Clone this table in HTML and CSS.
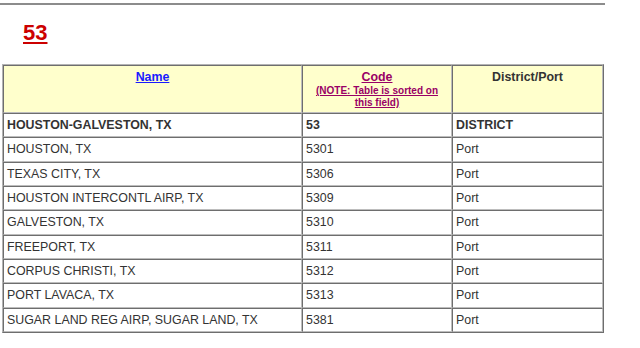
FILE: index.html
```html
<!DOCTYPE html>
<html>
<head>
<meta charset="utf-8">
<link rel="stylesheet" href="styles.css">
</head>
<body>
<div class="rule"></div>
<h2 class="district"><a href="#">53</a></h2>
<table class="ports">
  <thead>
    <tr>
      <th class="c-name"><a class="sort name-link" href="#">Name</a></th>
      <th class="c-code"><a class="sort code-link" href="#">Code</a><br><a class="note" href="#">(NOTE: Table is sorted on this field)</a></th>
      <th class="c-type"><span class="plain">District/Port</span></th>
    </tr>
  </thead>
  <tbody>
    <tr class="lead"><td>HOUSTON-GALVESTON, TX</td><td>53</td><td>DISTRICT</td></tr>
    <tr><td>HOUSTON, TX</td><td>5301</td><td>Port</td></tr>
    <tr><td>TEXAS CITY, TX</td><td>5306</td><td>Port</td></tr>
    <tr><td>HOUSTON INTERCONTL AIRP, TX</td><td>5309</td><td>Port</td></tr>
    <tr><td>GALVESTON, TX</td><td>5310</td><td>Port</td></tr>
    <tr><td>FREEPORT, TX</td><td>5311</td><td>Port</td></tr>
    <tr><td>CORPUS CHRISTI, TX</td><td>5312</td><td>Port</td></tr>
    <tr><td>PORT LAVACA, TX</td><td>5313</td><td>Port</td></tr>
    <tr><td>SUGAR LAND REG AIRP, SUGAR LAND, TX</td><td>5381</td><td>Port</td></tr>
  </tbody>
</table>
</body>
</html>
```
FILE: styles.css
```css
html, body {
  margin: 0;
  padding: 0;
  background: #ffffff;
}
body {
  font-family: "Liberation Sans", Arial, sans-serif;
  color: #333333;
}
.rule {
  width: 605px;
  height: 2px;
  margin-top: 3px;
  background: #8c8c8c;
}
.district {
  margin: 16px 0 19px 23px;
  font-size: 22px;
  line-height: 24px;
  font-weight: bold;
}
.district a {
  color: #cc0000;
}
.ports {
  margin-left: 2px;
  width: 602px;
  table-layout: fixed;
  border-collapse: separate;
  border-spacing: 0;
  border-top: 1px solid #b4b4b4;
  border-left: 1px solid #b4b4b4;
  border-right: 1px solid #6e6e6e;
  border-bottom: 1px solid #6e6e6e;
  font-size: 12.4px;
}
.ports th, .ports td {
  box-sizing: border-box;
  border-top: 1px solid #6e6e6e;
  border-left: 1px solid #6e6e6e;
  border-right: 1px solid #bdbdbd;
  border-bottom: 1px solid #bdbdbd;
}
.ports th {
  background: #ffffcc;
  height: 48px;
  vertical-align: top;
  text-align: center;
  padding: 4px 3px 0;
  line-height: 14px;
  font-weight: bold;
}
.c-name { width: 299px; }
.c-code { width: 150px; }
.c-type { width: 151px; }
.ports td {
  height: 24.33px;
  padding: 0 3px;
  vertical-align: middle;
  line-height: 14px;
}
.lead td {
  font-weight: bold;
}
.name-link {
  color: #1a1aff;
}
.code-link {
  color: #990066;
}
.note {
  display: inline-block;
  margin-top: 1px;
  font-size: 10px;
  line-height: 12px;
  color: #990066;
  width: 126px;
}
.plain {
  color: #333333;
}
```
